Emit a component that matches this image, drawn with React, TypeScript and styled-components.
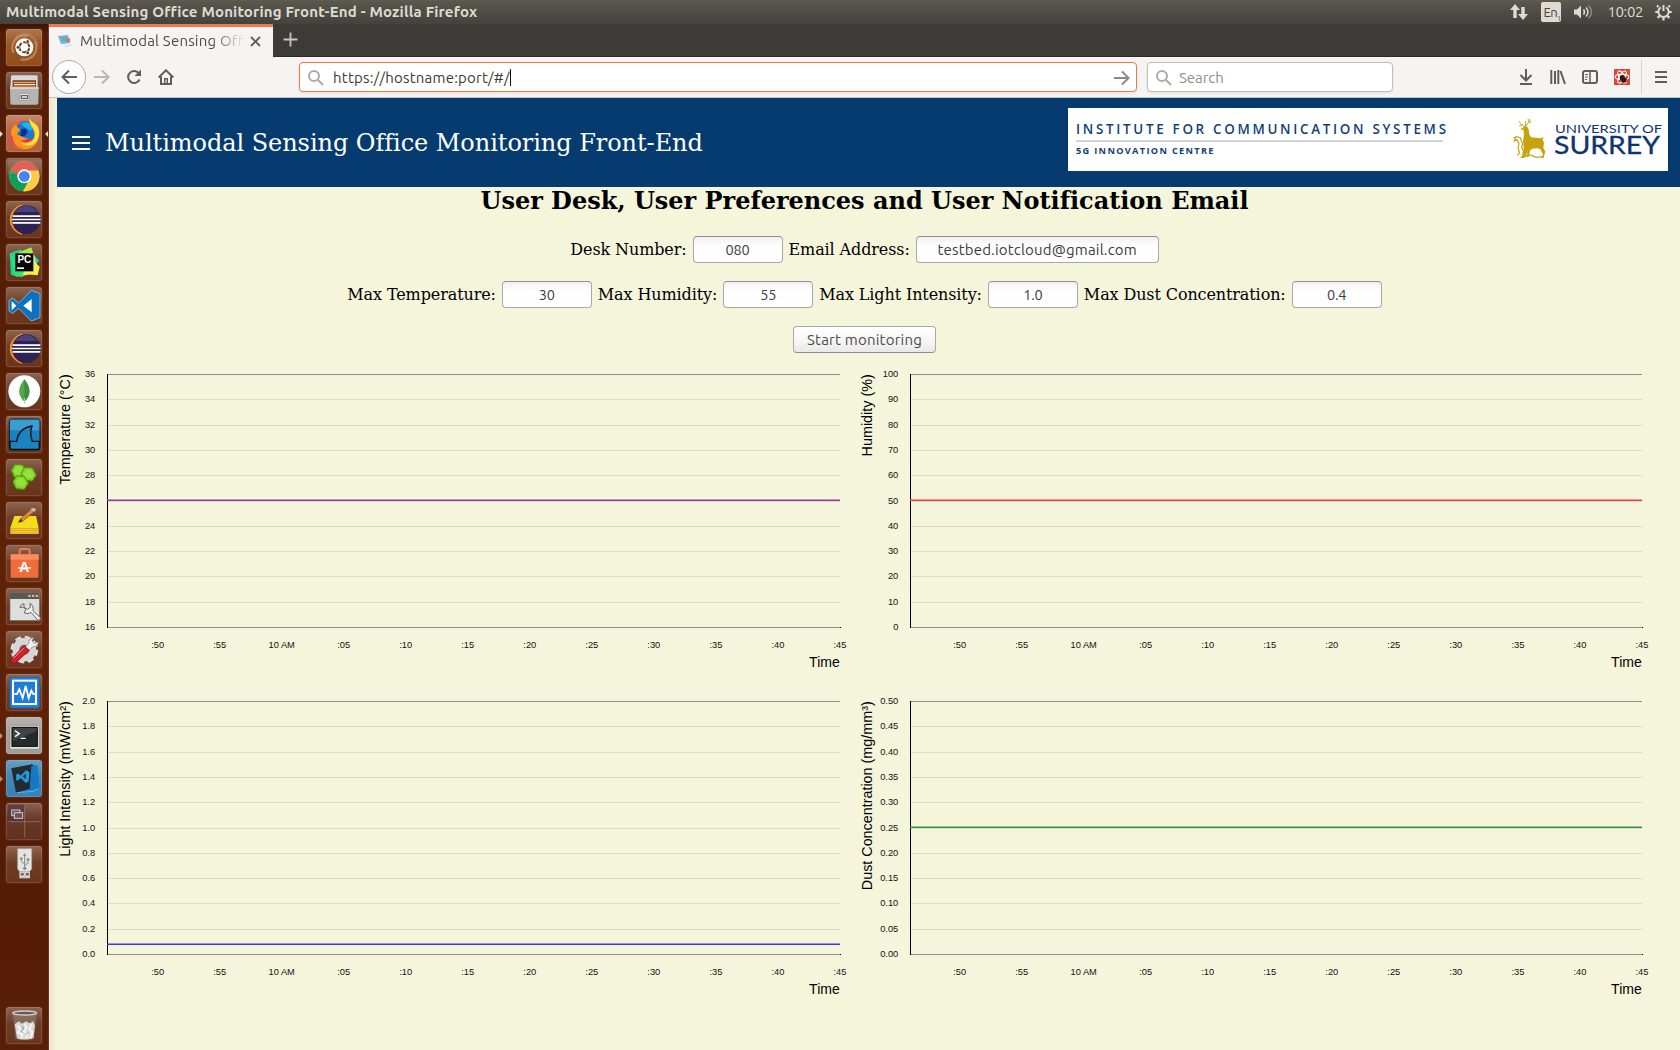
import React from "react";
import styled, { createGlobalStyle, css } from "styled-components";

const UI = `"Ubuntu", "Noto Sans", "Open Sans", sans-serif`;
const SERIF = `"DejaVu Serif", serif`;
const ARIAL = `"Liberation Sans", Arial, sans-serif`;

const GlobalStyle = createGlobalStyle`
  * { box-sizing: border-box; }
  html, body { margin: 0; padding: 0; overflow: hidden; background: #f5f5dc; }
  svg { display: block; flex: none; }
`;

const Desktop = styled.div`
  width: 1680px;
  height: 1050px;
  display: grid;
  grid-template-rows: 24px 1026px;
  font-family: ${UI};
  overflow: hidden;
`;

const MenuBar = styled.header`
  display: flex;
  align-items: center;
  justify-content: space-between;
  padding: 0 8px 0 6px;
  background: linear-gradient(#5f5d4e 0, #57554c 3px, #43423d 100%);
  color: #dfdbd2;
`;

const Label = styled.span<{ $size: number; $spacing?: number; $weight?: number; $color?: string }>`
  font-size: ${(p) => p.$size}px;
  letter-spacing: ${(p) => p.$spacing ?? 0}px;
  font-weight: ${(p) => p.$weight ?? 400};
  color: ${(p) => p.$color ?? "inherit"};
  line-height: 20px;
  white-space: nowrap;
`;

const Indicators = styled.div`
  display: flex;
  align-items: center;
`;

const Keyboard = styled.div`
  width: 20px;
  height: 20px;
  margin: 0 13px 0 13px;
  border-radius: 2px;
  background: #dfdbd2;
  color: #45443f;
  font-size: 13px;
  line-height: 20px;
  padding-left: 2px;
  letter-spacing: -0.6px;
  white-space: nowrap;
  sub { font-size: 7px; line-height: 0; letter-spacing: 0; }
`;

const Clock = styled.span`
  font-size: 15px;
  letter-spacing: -0.4px;
  margin: 0 12px 0 13px;
  line-height: 20px;
`;

const Workspace = styled.div`
  display: grid;
  grid-template-columns: 49px 1631px;
  min-height: 0;
`;

const Launcher = styled.nav`
  display: flex;
  flex-direction: column;
  gap: 6px;
  padding: 5px 0 6px 6px;
  border-right: 1px solid #7a3030;
  background: linear-gradient(#3d1503 0, #541c05 10px, #571e06 30%, #622306 60%, #551c05 80%, #581e07 100%);
`;

const Tile = styled.div<{ $bg?: string; $last?: boolean }>`
  position: relative;
  width: 36px;
  height: 37px;
  flex: none;
  border-radius: 3px;
  background: linear-gradient(rgba(255, 255, 255, 0.24), rgba(255, 255, 255, 0.04) 45%, rgba(255, 255, 255, 0)),
    ${(p) => p.$bg ?? "#69351c"};
  box-shadow: inset 0 0 0 1px rgba(255, 255, 255, 0.12), 0 0 2px rgba(255, 220, 190, 0.2);
  ${(p) => p.$last && css`margin-top: auto;`}
  svg { margin-left: -0.5px; }
`;

const Pip = styled.i<{ $side: "left" | "right"; $hollow?: boolean }>`
  position: absolute;
  top: 16px;
  width: 0;
  height: 0;
  border: 3px solid transparent;
  opacity: ${(p) => (p.$hollow ? 0.6 : 1)};
  ${(p) =>
    p.$side === "left"
      ? css`left: -6px; border-left-color: #e4dcd4; border-right-width: 0;`
      : css`right: -6px; border-right-color: #e4dcd4; border-left-width: 0;`}
`;

const Browser = styled.main`
  display: grid;
  grid-template-rows: 33px 41px 1fr;
  min-width: 0;
`;

const TabStrip = styled.div`
  display: flex;
  background: #3c3b37;
  border-bottom: 1px solid #2b2a27;
`;

const Tab = styled.div`
  display: flex;
  align-items: center;
  width: 224px;
  height: 33px;
  padding: 0 9px 2px 9px;
  border-top: 3px solid #f07746;
  background: #f5f4f2;
  color: #4a4a48;
`;

const TabTitle = styled.div`
  width: 165px;
  margin: 0 5px 0 7px;
  overflow: hidden;
  white-space: nowrap;
  font-size: 15px;
  line-height: 20px;
  letter-spacing: 0.2px;
  mask-image: linear-gradient(to right, #000 132px, transparent 165px);
`;

const NewTab = styled.div`
  padding: 8px 0 0 10px;
`;

const Toolbar = styled.div`
  display: flex;
  align-items: center;
  padding: 0 12px 0 3px;
  background: #f5f4f2;
  border-bottom: 1px solid #c2c0bd;
`;

const BackButton = styled.div`
  display: grid;
  place-items: center;
  width: 34px;
  height: 34px;
  border-radius: 50%;
  border: 1px solid #acaaa7;
  background: #fdfdfd;
`;

const Field = styled.div<{ $width: number; $focused?: boolean }>`
  display: flex;
  align-items: center;
  width: ${(p) => p.$width}px;
  height: 30px;
  padding: 1px 6px 0 7px;
  border-radius: 4px;
  border: 1px solid ${(p) => (p.$focused ? "#f07746" : "#c0bebb")};
  box-shadow: 0 1px 3px rgba(0, 0, 0, 0.08);
  background: #fff;
`;

const Caret = styled.i`
  width: 1px;
  height: 17px;
  background: #111;
`;

const Gap = styled.span<{ $w?: number }>`
  flex: ${(p) => (p.$w === undefined ? "1 1 0" : `0 0 ${p.$w}px`)};
`;

const Divider = styled.i`
  width: 1px;
  height: 34px;
  background: #d6d4d1;
`;

const Page = styled.section`
  background: linear-gradient(to right, #e8e8cf 0, #f5f5dc 8px);
  padding-left: 8px;
  color: #000;
  font-family: ${SERIF};
`;

const AppBar = styled.div`
  display: flex;
  align-items: center;
  height: 89px;
  padding: 0 12px 7px 15px;
  background: #063b70;
  color: #fff;
`;

const AppTitle = styled.h1`
  margin: 7px 0 0 15px;
  flex: 1;
  font-size: 24px;
  font-weight: 400;
  letter-spacing: -0.05px;
  line-height: 30px;
  white-space: nowrap;
`;

const MenuButton = styled.div`
  margin-top: 7px;
`;

const LogoCard = styled.div`
  display: flex;
  width: 600px;
  height: 63px;
  background: #fff;
  color: #0d3a75;
`;

const Content = styled.div`
  width: 1615px;
  display: flex;
  flex-direction: column;
  align-items: center;
`;

const Heading = styled.h2`
  margin: 0;
  font-size: 24px;
  letter-spacing: -0.02px;
  line-height: 28px;
  height: 49px;
  white-space: nowrap;
`;

const FormRow = styled.div`
  display: flex;
  align-items: center;
  justify-content: center;
  gap: 6px;
  height: 27px;
  margin-bottom: 18px;
  font-size: 16px;
  letter-spacing: -0.11px;
  white-space: nowrap;
`;

const Input = styled.div<{ $width: number; $wide?: boolean }>`
  width: ${(p) => p.$width}px;
  height: 27px;
  border: 1px solid #a9a8a6;
  border-top-color: #8f8e8c;
  border-radius: 4px;
  background: linear-gradient(#f1f1f1, #fdfdfd 8px, #fff);
  color: #3c3c3c;
  font-family: ${UI};
  font-size: ${(p) => (p.$wide ? 15 : 14.5)}px;
  letter-spacing: ${(p) => (p.$wide ? 0.18 : -0.2)}px;
  line-height: 26px;
  text-align: center;
`;

const StartButton = styled.button`
  width: 143px;
  height: 27px;
  padding: 0;
  border: 1px solid #a9a8a6;
  border-bottom-color: #8f8e8c;
  border-radius: 4px;
  background: linear-gradient(#fff, #f7f7f7 50%, #e9e8e7);
  color: #4c4c4c;
  font-family: ${UI};
  font-size: 15px;
  letter-spacing: 0.22px;
  line-height: 24px;
`;

const Charts = styled.div`
  display: grid;
  grid-template-columns: 802px 802px;
  grid-auto-rows: 327px;
  width: 1604px;
  margin-top: -14px;
`;

const ChartSvg = styled.svg`
  overflow: visible;
  font-family: ${ARIAL};
`;

/* ---------- charts ---------- */

type ChartProps = {
  title: string;
  ticks: string[];
  ratio: number;
  color: string;
  shift?: number;
};

const TIMES = [":50", ":55", "10 AM", ":05", ":10", ":15", ":20", ":25", ":30", ":35", ":40", ":45"];

function Chart({ title, ticks, ratio, color, shift = 0 }: ChartProps) {
  const top = 17;
  const height = 253;
  const x = 50 + shift;
  const right = 783;
  const line = top + Math.round(height * (1 - ratio)) - 1;
  return (
    <ChartSvg width="802" height="327" viewBox="0 0 802 327">
      {ticks.map((t, i) => {
        const y = Math.round(top + (height * i) / 10);
        const edge = i === 0 || i === 10;
        return (
          <g key={t}>
            <rect x={x} y={y} width={right - x} height="1" fill={edge ? "#90908c" : "#dadad4"} />
            <text x={38.3 + shift} y={y + 3.4} fontSize="9.3" textAnchor="end" fill="#111">{t}</text>
          </g>
        );
      })}
      <rect x={x} y={top} width="1" height={height + 1} fill="#000" />
      <rect x={right} y={top + height} width="1" height="1" fill="#000" />
      <rect x={x} y={line - 0.5} width={right - x} height="1.5" fill={color} />
      {TIMES.map((t, i) => (
        <text key={t} x={100.6 + i * 62.03} y="290.6" fontSize="9.3" textAnchor="middle" fill="#111">{t}</text>
      ))}
      <text x="782.7" y="310" fontSize="14" textAnchor="end">Time</text>
      <text transform="translate(12.8 17.3) rotate(-90)" fontSize="14.35" textAnchor="end">{title}</text>
    </ChartSvg>
  );
}

const CHARTS: ChartProps[] = [
  { title: "Temperature (°C)", ticks: ["36", "34", "32", "30", "28", "26", "24", "22", "20", "18", "16"], ratio: 0.5, color: "#9a3696" },
  { title: "Humidity (%)", ticks: ["100", "90", "80", "70", "60", "50", "40", "30", "20", "10", "0"], ratio: 0.5, color: "#fb3b36", shift: 1 },
  { title: "Light Intensity (mW/cm²)", ticks: ["2.0", "1.8", "1.6", "1.4", "1.2", "1.0", "0.8", "0.6", "0.4", "0.2", "0.0"], ratio: 0.037, color: "#3535f2" },
  { title: "Dust Concentration (mg/mm³)", ticks: ["0.50", "0.45", "0.40", "0.35", "0.30", "0.25", "0.20", "0.15", "0.10", "0.05", "0.00"], ratio: 0.5, color: "#359a35", shift: 1 },
];

/* ---------- launcher icons ---------- */

const Glyph = ({ children }: { children: React.ReactNode }) => (
  <svg width="37" height="37" viewBox="0 0 111 111">{children}</svg>
);

const UbuntuIcon = () => (
  <Glyph>
    <g fill="none" stroke="#e3bd93" strokeWidth="7" opacity=".45">
      <path d="M22 72C10 40 35 14 66 20" /><path d="M88 38C100 70 76 97 44 91" />
      <path d="M30 24C58 4 92 22 94 52" opacity=".5" />
    </g>
    <circle cx="55" cy="55" r="27" fill="#fff" />
    <circle cx="55" cy="55" r="15" fill="none" stroke="#6a3a17" strokeWidth="6" strokeDasharray="26 5.4" strokeDashoffset="-3" />
    <g fill="#6a3a17" stroke="#fff" strokeWidth="2"><circle cx="36" cy="55" r="5.5" /><circle cx="65" cy="38" r="5.5" /><circle cx="65" cy="72" r="5.5" /></g>
  </Glyph>
);

const FilesIcon = () => (
  <Glyph>
    <path d="M15 14q0-4 4-4h72q4 0 4 4v32H13z" fill="#d9d9d8" />
    <path d="M20 25h70v22H20z" fill="#5a2c12" />
    <path d="M22 29h66v5H22z" fill="#f2a266" /><path d="M24 36h64v4H24z" fill="#fff2e0" /><path d="M22 40h66v6H22z" fill="#e06a24" />
    <path d="M12 46h86l-1 48q0 4-4 4H17q-4 0-4-4z" fill="#b4b4b4" /><path d="M12 46h86v4H12z" fill="#e8e8e8" />
    <rect x="41" y="64" width="29" height="21" rx="3" fill="#e6e6e6" stroke="#888" strokeWidth="2" />
    <rect x="46" y="71" width="19" height="8" fill="#eee" stroke="#444" strokeWidth="3" />
  </Glyph>
);

const FirefoxIcon = () => (
  <Glyph>
    <circle cx="55" cy="57" r="41" fill="#ff5a22" />
    <path d="M14 48C10 70 24 98 56 99 90 98 104 70 98 42L84 64z" fill="#f72c4a" />
    <path d="M30 38C38 20 64 10 82 28l10 40L40 78z" fill="#1976d8" />
    <path d="M44 28q20-14 38 5l-8 16z" fill="#16b7ee" /><path d="M46 43q16-7 18 8-4 16-22 13z" fill="#142e82" />
    <path d="M70 9c-3 27 20 34 14 58-6 16-27 20-43 9 14 2 23-5 26-7-15 3-20-9-33-8-2-13 8-10 8-18-6-4-11-7-11-15-9 5-16 14-17 30-2 16 6 36 24 42 36 12 64-13 60-49-2-19-20-26-28-42z" fill="#ff971b" />
    <path d="M70 9c-1 24 21 31 17 54-4 21-30 27-44 19 8 11 31 14 45 1 19-19 13-48-1-57-8-5-14-9-17-17z" fill="#ffe43a" />
    <path d="M13 55C7 82 28 103 57 99 31 98 20 84 20 66z" fill="#ff2f69" />
  </Glyph>
);

const ChromeIcon = () => (
  <Glyph>
    <circle cx="55" cy="55" r="45" fill="#fc4" />
    <path d="M15 34A45 45 0 0 1 97 38H55L39 64z" fill="#dc4b3d" />
    <path d="M15 34A45 45 0 0 0 51 100L72 62H42z" fill="#109d58" />
    <path d="M55 55V38H97A45 45 0 0 1 52 100L71 64z" fill="#fc4" />
    <circle cx="55" cy="55" r="21" fill="#fff" /><circle cx="55" cy="55" r="16.5" fill="#4285f4" />
    <path d="M5 5h101v45Q55 38 5 50z" fill="#fff" opacity=".12" />
  </Glyph>
);

const EclipseIcon = () => (
  <Glyph>
    <path d="M48 12A45 45 0 0 0 48 100Q18 88 19 56 20 22 48 12z" fill="#f6911d" stroke="#f6911d" strokeWidth="3" />
    <circle cx="61" cy="56" r="43" fill="#2c2255" /><path d="M25 33Q60-5 96 33z" fill="#58508a" opacity=".7" />
    <g fill="#fff"><path d="M20 43h83v5H20zM18 53h86v5H18zM20 63h83v5H20z" /></g>
  </Glyph>
);

const PyCharmIcon = () => (
  <Glyph>
    <path d="M11 28l34-12 10 55-22 27-18-6z" fill="#22d48a" /><path d="M40 24L76 10l10 30-6 50-48 8z" fill="#9be94f" />
    <path d="M82 32l18 17-16 24z" fill="#19c8ee" /><path d="M72 20l14 16 4 22 11 10-6 26-30-3-24 7z" fill="#f1f14b" />
    <path d="M14 30l14 64 22 5 4-20z" fill="#2ce07f" />
    <rect x="28" y="28" width="54" height="54" fill="#090909" />
    <text x="55" y="57" fontSize="30" fontWeight="700" fill="#fff" fontFamily={ARIAL} textAnchor="middle">PC</text>
    <path d="M33 70h21v5H33z" fill="#fff" />
  </Glyph>
);

const CodeIcon = () => (
  <Glyph>
    <path d="M76 10l26 10v72l-26 10-38-38-18 15-11-7V40l11-7 18 15z" fill="#0d71bd" stroke="#b9d2e6" strokeWidth="2" />
    <path d="M17 42v28l14-14zM52 56l25-20v40z" fill="#fff" />
  </Glyph>
);

const MongoIcon = () => (
  <Glyph>
    <circle cx="55" cy="55" r="48" fill="#fff" />
    <path d="M55 19C75 43 76 68 55 86 34 68 35 43 55 19z" fill="#58a64c" /><path d="M55 19C75 43 76 68 55 86z" fill="#3f8f41" />
    <path d="M54 75h3v17h-3z" fill="#b8c4b8" />
  </Glyph>
);

const SharkIcon = () => (
  <Glyph>
    <rect x="10" y="9" width="92" height="93" rx="8" fill="#1e7fbd" stroke="#0b1d2b" strokeWidth="3" />
    <path d="M12 11h88v32H12z" fill="#49a9dc" opacity=".7" />
    <path d="M12 76h20q6-40 46-46-8 23 1 46h21v20q0 4-4 4H16q-4 0-4-4z" fill="#1a83c0" stroke="#061019" strokeWidth="4" />
  </Glyph>
);

const HexIcon = () => (
  <Glyph>
    {[[39, 38], [68, 47], [44, 72]].map(([x, y]) => (
      <g key={x} transform={`translate(${x} ${y})`}>
        <path d="M-23-4L-12-22 11-20 23 1 11 19-14 17z" fill="#7ed321" stroke="#4b9612" strokeWidth="3" />
        <path d="M-16-3L-8-16 8-15 16 0 9 11-10 10z" fill="#95e03c" />
      </g>
    ))}
  </Glyph>
);

const NotesIcon = () => (
  <Glyph>
    <path d="M25 42h65l8 36H13z" fill="#f5dc1b" /><path d="M13 78h85v18H13z" fill="#e2a70d" />
    <path d="M13 82h85M13 88h85M13 93h85" stroke="#fae36c" strokeWidth="2" />
    <path d="M37 61l8-12 33-30q8-3 12 5L49 59z" fill="#d88b40" stroke="#7c481c" strokeWidth="2" />
    <path d="M78 19q8-3 12 5l-5 5-11-7z" fill="#e8b6a8" /><path d="M37 61l8-12 4 9z" fill="#332" />
  </Glyph>
);

const StoreIcon = () => (
  <Glyph>
    <path d="M41 33V18q0-6 6-6h18q6 0 6 6v15" fill="none" stroke="#ee7b52" strokeWidth="6" />
    <path d="M14 28h84l-1 70H14z" fill="#ef6d3b" /><path d="M14 28h84v16H14z" fill="#f78d61" />
    <text x="55" y="82" textAnchor="middle" fontSize="42" fontWeight="700" fill="#fff" fontFamily={ARIAL}>A</text>
    <path d="M36 69h39" stroke="#fff" strokeWidth="4" />
  </Glyph>
);

const WindowToolIcon = () => (
  <Glyph>
    <rect x="12" y="15" width="88" height="82" fill="#dededd" stroke="#777" strokeWidth="2" />
    <path d="M12 15h88v18H12z" fill="#595853" /><path d="M67 20h7v7h-7zM78 20h7v7h-7zM89 20h7v7h-7z" fill="#d8b878" />
    <path d="M54 47q-10 1-12 12l11-2 6 8-4 10q13 5 20-2l20 23q9 3 9-6L81 68q3-15-9-22l1 12-9 6-10-6z" fill="#efefee" stroke="#666" strokeWidth="3" />
  </Glyph>
);

const SettingsIcon = () => (
  <Glyph>
    <circle cx="55" cy="56" r="35" fill="#dcdcdb" stroke="#dcdcdb" strokeWidth="13" strokeDasharray="17 10.5" />
    <circle cx="55" cy="56" r="35" fill="#d6d6d5" /><circle cx="55" cy="56" r="15" fill="#76604f" />
    <path d="M57 48l11-10q-1-17 16-19l-6 11 8 8 11-6q1 15-18 16L68 60z" fill="#eee" stroke="#777" strokeWidth="2" />
    <path d="M55 44l15 14-40 37q-8 4-13-1-4-7 1-12z" fill="#d21f2c" stroke="#840d17" strokeWidth="2" />
    <path d="M54 50L23 82" stroke="#f58a8d" strokeWidth="3" />
  </Glyph>
);

const MonitorIcon = () => (
  <Glyph>
    <rect x="12" y="10" width="88" height="92" rx="6" fill="#2180e0" stroke="#1467c8" strokeWidth="3" />
    <rect x="21" y="20" width="69" height="70" fill="#1e7dd9" stroke="#fff" strokeWidth="6" />
    <path d="M25 60h8l7-14 10 26 9-36 9 36 8-22 6 10h7" fill="none" stroke="#fff" strokeWidth="5.5" />
  </Glyph>
);

const TerminalIcon = () => (
  <Glyph>
    <rect x="12" y="25" width="88" height="72" rx="3" fill="#ddd" stroke="#888" strokeWidth="2" />
    <rect x="18" y="31" width="76" height="57" fill="#252a2a" stroke="#060606" strokeWidth="3" />
    <path d="M20 33h72v10L20 72z" fill="#fff" opacity=".12" />
    <path d="M27 41l13 9-13 9M44 64h15" fill="none" stroke="#fff" strokeWidth="4" />
  </Glyph>
);

const CodeBookIcon = () => (
  <Glyph>
    <path d="M70 22l21-5 6 70-16 8-44-2z" fill="#1588d3" /><path d="M16 25l62-12 8 6-9 66-47 14z" fill="#232a30" />
    <path d="M76 18l18-3 6 67-19 8-10-7z" fill="#1479c2" />
    <path d="M60 31l10 5-2 28-9 5-15-15-9 8-5-3 1-16 7-2 6 6z" fill="#2499e3" /><path d="M60 41l-1 16-9-8z" fill="#232a30" />
    <path d="M32 98l49-4 15-8" stroke="#50b5f1" strokeWidth="3" fill="none" />
  </Glyph>
);

const SwitcherIcon = () => (
  <Glyph>
    <path d="M5 5h50v50H5z" fill="#50303e" opacity=".7" />
    <path d="M56 7v96M7 56h96" stroke="#a47c68" strokeWidth="2" />
    <g fill="#67545a" stroke="#d5c8c9" strokeWidth="3"><rect x="17" y="21" width="25" height="17" /><rect x="25" y="29" width="25" height="17" /></g>
  </Glyph>
);

const UsbIcon = () => (
  <Glyph>
    <path d="M35 8h42v61l-7 8H41l-6-8z" fill="#e4e4e2" stroke="#aaa" strokeWidth="2" />
    <path d="M40 77h32v20H40z" fill="#ccc" /><path d="M45 82h8v6h-8zM60 82h8v6h-8z" fill="#555" />
    <path d="M56 29v37M56 54l-10-7v-8M56 59l10-8v-8" fill="none" stroke="#888" strokeWidth="3" />
    <path d="M56 21l5 9H51z" fill="#888" /><circle cx="56" cy="67" r="5" fill="#888" /><circle cx="46" cy="38" r="4" fill="#888" /><path d="M62 37h8v7h-8z" fill="#888" />
  </Glyph>
);

const TrashIcon = () => (
  <Glyph>
    <path d="M20 20h72l-8 76q-28 8-55 0z" fill="#8f7c74" opacity=".65" />
    <path d="M26 52l12-9 10 7 12-7 11 6 11-6 5 13-5 37q-27 9-49 1z" fill="#d9d8d5" />
    <path d="M34 55l9 10-7 12 13 6-3 12M55 50l7 11-9 11 12 7-5 15M77 52l-7 15 9 8-6 19" fill="none" stroke="#f4f4f2" strokeWidth="6" />
    <path d="M48 57l5 9-9 8M68 75l-8 7" stroke="#8f8e8a" strokeWidth="3" fill="none" />
    <ellipse cx="56" cy="18" rx="36" ry="6" fill="#6b584f" stroke="#cfcecc" strokeWidth="4" />
  </Glyph>
);

type Entry = { icon: React.ComponentType; bg?: string; left?: boolean; right?: boolean; hollow?: boolean };

const APPS: Entry[] = [
  { icon: UbuntuIcon, bg: "#934d1b" },
  { icon: FilesIcon },
  { icon: FirefoxIcon, bg: "#b0633c", left: true, right: true },
  { icon: ChromeIcon },
  { icon: EclipseIcon },
  { icon: PyCharmIcon },
  { icon: CodeIcon },
  { icon: EclipseIcon },
  { icon: MongoIcon },
  { icon: SharkIcon },
  { icon: HexIcon },
  { icon: NotesIcon },
  { icon: StoreIcon },
  { icon: WindowToolIcon },
  { icon: SettingsIcon },
  { icon: MonitorIcon },
  { icon: TerminalIcon, bg: "#a39b96", left: true, hollow: true },
  { icon: CodeBookIcon, bg: "#3b82b2", left: true, hollow: true },
  { icon: SwitcherIcon, bg: "#63301f" },
  { icon: UsbIcon },
];

/* ---------- chrome icons ---------- */

const Line = styled.svg<{ $c?: string; $w?: number }>`
  fill: none;
  stroke: ${(p) => p.$c ?? "#5f5e5c"};
  stroke-width: ${(p) => p.$w ?? 2};
`;

const SearchGlyph = () => (
  <Line $c="#acabaa" width="18" height="18" viewBox="0 0 18 18">
    <circle cx="7" cy="7" r="5" /><path d="M10.5 10.5l5.5 5.5" />
  </Line>
);

const Stag = () => (
  <svg width="37" height="42" viewBox="0 0 111 126" fill="#c6a30d">
    <path d="M34 34l-7 3-1-3 8-7 5-3 7 2 4 8 2 15 5 9 21 2 9 1 7-5-2 9 4 10-2 14 6 12-3 10-3 10h-6l5-12-8-15-10-3-14 1-7 6-4 19-6 1 3-21-4 14-6 9H27l9-16-1-17-2-19 3-18z" />
    <path d="M38 25C29 19 22 17 23 10M32 20l-10 3M42 25C44 15 54 15 52 2M48 14l10-3M40 24l1-15M53 8l-6-3" fill="none" stroke="#c6a30d" strokeWidth="3" />
    <path d="M5 60l8-4 12 3 3 10 4 9-3 10 6 12-3 8 4 7M11 57L7 67l8-2 6 12-3 14 5 12-7 9M6 70l8-4M26 118l28-7 20 7 20-2" fill="none" stroke="#c6a30d" strokeWidth="3.6" />
  </svg>
);

const Logo = () => (
  <LogoCard>
    <svg width="435" height="63" viewBox="0 0 435 63" fill="#143f78" fontFamily={`"Open Sans", sans-serif`}>
      <text x="8" y="26" fontSize="13.4" fontWeight="600" textLength="370" lengthAdjust="spacing">INSTITUTE FOR COMMUNICATION SYSTEMS</text>
      <rect x="8" y="32.3" width="367" height="1.6" fill="#c3c9d5" />
      <text x="8" y="46" fontSize="9.2" fontWeight="700" textLength="137.5" lengthAdjust="spacing">5G INNOVATION CENTRE</text>
    </svg>
    <Gap $w={9} />
    <svg width="37" height="63" viewBox="0 0 37 63"><g transform="translate(0 10)"><Stag /></g></svg>
    <Gap $w={6} />
    <svg width="108" height="63" viewBox="0 0 108 63" fill="#0e356f" fontFamily='"Lato", sans-serif'>
      <text x="0" y="25" fontSize="12" textLength="107" lengthAdjust="spacingAndGlyphs">UNIVERSITY OF</text>
      <text x="-1" y="46" fontSize="25" textLength="106" lengthAdjust="spacingAndGlyphs" stroke="#0e356f" strokeWidth=".3">SURREY</text>
    </svg>
  </LogoCard>
);

export default function App() {
  return (
    <Desktop>
      <GlobalStyle />
      <MenuBar>
        <Label $size={15} $weight={700} $spacing={0.18}>Multimodal Sensing Office Monitoring Front-End - Mozilla Firefox</Label>
        <Indicators>
          <svg width="18" height="18" viewBox="0 0 18 18" fill="#dfdbd2"><path d="M5 1l5 6H6.7v8H3.3V7H0zM13 17l-5-6h3.3V4h3.4v7H18z" /></svg>
          <Keyboard>En<sub>1</sub></Keyboard>
          <svg width="20" height="18" viewBox="0 0 20 18" fill="none" stroke="#dfdbd2" strokeWidth="1.5">
            <path d="M0 6.5h3l4-4v13l-4-4H0z" fill="#dfdbd2" stroke="none" /><path d="M9.5 6.5q2 2.5 0 5M12 4.5q4 4.5 0 9" /><path d="M14.5 2.5q6 6.5 0 13" opacity=".4" />
          </svg>
          <Clock>10:02</Clock>
          <svg width="17" height="18" viewBox="0 0 17 18" fill="none" stroke="#dfdbd2">
            <path d="M5.8 4.4a5.2 5.2 0 1 0 5.4 0" strokeWidth="2" /><path d="M8.5 2v6" strokeWidth="2" />
            <path d="M3.5 4L2 2.5M13.5 4L15 2.5M3 9H.3M14 9h2.7M4.5 13L2.6 14.9M12.5 13l1.9 1.9M8.5 14.5v3" strokeWidth="2.2" />
          </svg>
        </Indicators>
      </MenuBar>
      <Workspace>
        <Launcher>
          {APPS.map(({ icon: Icon, bg, left, right, hollow }, i) => (
            <Tile key={i} $bg={bg}>
              <Icon />
              {left && <Pip $side="left" $hollow={hollow} />}
              {right && <Pip $side="right" />}
            </Tile>
          ))}
          <Tile $last><TrashIcon /></Tile>
        </Launcher>
        <Browser>
          <TabStrip>
            <Tab>
              <svg width="15" height="14" viewBox="0 0 15 14">
                <path d="M0 2l10-1 2 8-9 1z" fill="#78aee0" /><path d="M4 3l5 0 1 4-5 0z" fill="#55b9a5" /><path d="M8 5l4-1 0 4-3 0z" fill="#e0795c" /><path d="M5 11l8-1 1 2-7 1z" fill="#dfe4ea" />
              </svg>
              <TabTitle>Multimodal Sensing Office Monitoring</TabTitle>
              <Line $w={1.8} width="11" height="11" viewBox="0 0 11 11"><path d="M1 1l9 9M10 1l-9 9" /></Line>
            </Tab>
            <NewTab><Line $c="#c9c6bf" $w={1.8} width="15" height="15" viewBox="0 0 15 15"><path d="M7.5 .5v14M.5 7.5h14" /></Line></NewTab>
          </TabStrip>
          <Toolbar>
            <BackButton><Line width="16" height="16" viewBox="0 0 16 16"><path d="M16 8H2M8 1.5L1.5 8 8 14.5" /></Line></BackButton>
            <Gap $w={8} />
            <Line $c="#b8b7b5" width="16" height="16" viewBox="0 0 16 16"><path d="M0 8h14M8 1.5L14.5 8 8 14.5" /></Line>
            <Gap $w={16} />
            <Line width="16" height="16" viewBox="0 0 16 16"><path d="M13.2 4.8A6 6 0 1 0 13.6 10.5" /><path d="M15 .5V7H8.5z" fill="#5f5e5c" stroke="none" /></Line>
            <Gap $w={16} />
            <Line width="16" height="16" viewBox="0 0 16 16"><path d="M.7 8.5L8 1.3l7.3 7.2M3 7.5V15h10V7.5" /><path d="M6.7 9.7h2.6V15H6.7z" strokeWidth="1.4" /></Line>
            <Gap $w={125} />
            <Field $width={838} $focused>
              <SearchGlyph />
              <Gap $w={8} />
              <Label $size={15} $spacing={0.22} $color="#3a3a3a">https://hostname:port/#/</Label>
              <Caret />
              <Gap />
              <Line $c="#8b8a88" width="16" height="16" viewBox="0 0 16 16"><path d="M0 8h14M8 1.5L14.5 8 8 14.5" /></Line>
            </Field>
            <Gap $w={10} />
            <Field $width={246}>
              <SearchGlyph />
              <Gap $w={6} />
              <Label $size={15} $spacing={-0.05} $color="#8e8d8b">Search</Label>
            </Field>
            <Gap />
            <Line width="14" height="16" viewBox="0 0 14 16"><path d="M7 0v11M1.5 6L7 11.5 12.5 6M1 15h12" /></Line>
            <Gap $w={17} />
            <Line width="16" height="16" viewBox="0 0 16 16"><path d="M1.3 1v14M5 2v13M8.3 1v14M10.5 2l4.5 13" /></Line>
            <Gap $w={16} />
            <Line width="16" height="16" viewBox="0 0 16 16"><rect x="1" y="2" width="14" height="12" rx="2" /><path d="M8 2v12" strokeWidth="1.5" /><path d="M3 5.5h3M3 8h3M3 10.5h2" strokeWidth="1" /></Line>
            <Gap $w={16} />
            <svg width="16" height="16" viewBox="0 0 16 16">
              <rect width="16" height="16" fill="#dc4637" />
              <g fill="none" stroke="#fff" strokeWidth="1.1"><ellipse cx="8" cy="8" rx="6.8" ry="2.7" /><ellipse cx="8" cy="8" rx="6.8" ry="2.7" transform="rotate(60 8 8)" /><ellipse cx="8" cy="8" rx="6.8" ry="2.7" transform="rotate(120 8 8)" /></g>
              <path d="M6 7l3-1 4 4-1 3-3 1-3-3z" fill="#2a1a18" /><path d="M5.5 9l7 3M10 6.5L8 13" stroke="#2a1a18" strokeWidth="1" />
            </svg>
            <Gap $w={11} />
            <Divider />
            <Gap $w={12} />
            <Line width="14" height="14" viewBox="0 0 14 14"><path d="M1 2h12M1 7h12M1 12h12" /></Line>
          </Toolbar>
          <Page>
            <AppBar>
              <MenuButton>
                <Line $c="#fff" width="18" height="14" viewBox="0 0 18 14"><path d="M0 1h18M0 7h18M0 13h18" /></Line>
              </MenuButton>
              <AppTitle>Multimodal Sensing Office Monitoring Front-End</AppTitle>
              <Logo />
            </AppBar>
            <Content>
              <Heading>User Desk, User Preferences and User Notification Email</Heading>
              <FormRow>
                Desk Number: <Input $width={90}>080</Input>
                Email Address: <Input $width={243} $wide>testbed.iotcloud@gmail.com</Input>
              </FormRow>
              <FormRow>
                Max Temperature: <Input $width={90}>30</Input>
                Max Humidity: <Input $width={90}>55</Input>
                Max Light Intensity: <Input $width={90}>1.0</Input>
                Max Dust Concentration: <Input $width={90}>0.4</Input>
              </FormRow>
              <FormRow><StartButton>Start monitoring</StartButton></FormRow>
            </Content>
            <Charts>
              {CHARTS.map((c) => <Chart key={c.title} {...c} />)}
            </Charts>
          </Page>
        </Browser>
      </Workspace>
    </Desktop>
  );
}
